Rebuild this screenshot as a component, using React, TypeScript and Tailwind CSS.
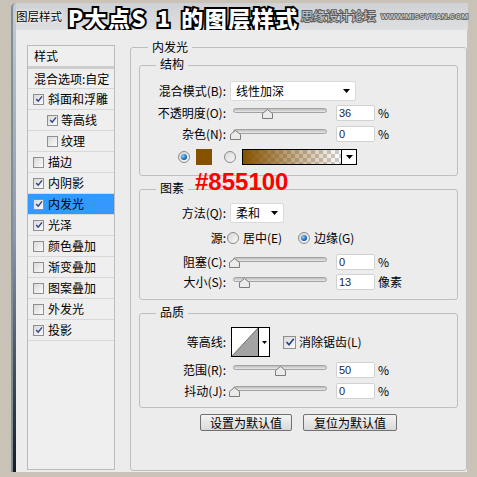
import type { ReactNode } from 'react'

const items = [
  { t: '斜面和浮雕', c: true, sub: false },
  { t: '等高线', c: true, sub: true },
  { t: '纹理', c: false, sub: true },
  { t: '描边', c: false, sub: false },
  { t: '内阴影', c: true, sub: false },
  { t: '内发光', c: true, sub: false, sel: true },
  { t: '光泽', c: true, sub: false },
  { t: '颜色叠加', c: false, sub: false },
  { t: '渐变叠加', c: false, sub: false },
  { t: '图案叠加', c: false, sub: false },
  { t: '外发光', c: false, sub: false },
  { t: '投影', c: true, sub: false },
]

function Check({ on, size = 11 }: { on: boolean; size?: number }) {
  return (
    <span
      className={`flex shrink-0 items-center justify-center border border-[#8e8f8f] bg-gradient-to-br from-[#d9d9d9] to-[#fbfbfb] ${size === 13 ? 'h-[13px] w-[13px]' : 'h-[11px] w-[11px]'}`}
    >
      {on && (
        <svg width={size - 3} height={size - 3} viewBox="0 0 10 10">
          <path d="M1.5 5 L4 7.8 L8.8 1.8" fill="none" stroke="#2b3f8f" strokeWidth="1.7" />
        </svg>
      )}
    </span>
  )
}

function Radio({ on }: { on: boolean }) {
  return (
    <span className="flex h-[12px] w-[12px] shrink-0 items-center justify-center rounded-full border border-[#8a8a8a] bg-gradient-to-br from-[#d6d6d6] to-[#fafafa]">
      {on && (
        <span className="h-[6px] w-[6px] rounded-full bg-[radial-gradient(circle_at_35%_35%,#8fd0ff,#1766b8_60%,#0b3f7a)]" />
      )}
    </span>
  )
}

function Slider({ pos }: { pos: number }) {
  return (
    <div className="relative ml-[7px] h-[16px] w-[94px] shrink-0">
      <div className="absolute left-0 right-0 top-[3px] h-[5px] rounded-full border border-[#a3a3a3] bg-gradient-to-b from-[#bdbdbd] to-[#e9e9e9]" />
      <svg className="absolute top-[4px]" style={{ left: pos - 5.5 }} width="11" height="10" viewBox="0 0 11 10">
        <path d="M5.5 0.5 L10.5 4.5 L10.5 9.5 L0.5 9.5 L0.5 4.5 Z" fill="#ebebeb" stroke="#7b7b7b" />
      </svg>
    </div>
  )
}

function NumBox({ v, unit }: { v: string; unit: string }) {
  return (
    <>
      <div className="ml-[9px] flex h-[16px] w-[39px] shrink-0 items-center rounded-[2px] border border-[#d2d2d2] bg-white pl-[2px] font-['Liberation_Sans',sans-serif] text-[11px] text-[#1d2740]">
        {v}
      </div>
      <span className="ml-[3px] text-[12px]">{unit}</span>
    </>
  )
}

function Label({ children }: { children: ReactNode }) {
  return <span className="w-[86px] shrink-0 text-right">{children}</span>
}

function Arrow() {
  return (
    <svg width="7" height="4" viewBox="0 0 7 4">
      <path d="M0 0 H7 L3.5 4 Z" fill="#000" />
    </svg>
  )
}

function Group({ title, className, children }: { title: string; className: string; children: ReactNode }) {
  return (
    <div className={`relative rounded-[3px] border border-[#bfbfbf] ${className}`}>
      <span className="absolute -top-[10px] left-[16px] bg-[#ececec] px-[4px] leading-[16px]">{title}</span>
      {children}
    </div>
  )
}

export default function App() {
  return (
    <div className="h-[477px] w-[477px] overflow-hidden bg-[#c9c2b6] pl-[11px] pt-[3px] font-['Noto_Sans_CJK_SC',sans-serif] text-[12px] leading-[16px] text-black">
      <div className="flex h-[469px] w-[457px]">
        <div className="w-[5px] shrink-0 rounded-tl-[6px] border-l-2 border-[#7f8c9b] bg-gradient-to-b from-[#c3ccd6] via-[#8a99ab] to-[#141c27]" />
        <div className="flex min-w-0 flex-1 flex-col">
          {/* title bar */}
          <div className="flex h-[27px] shrink-0 items-center whitespace-nowrap bg-gradient-to-b from-[#cfd2d5] to-[#dedfe0]">
            <span className="shrink-0 text-[11.5px] leading-none [text-shadow:0_0_3px_#fff,0_0_2px_#fff]">图层样式</span>
            <span className="ml-[6px] shrink-0 text-[22px] font-black leading-[22px] tracking-[1.5px] text-white [-webkit-text-stroke:4px_#000] [paint-order:stroke_fill] [word-spacing:3px]">
              P大点S 1 的图层样式
            </span>
            <span className="ml-[2px] shrink-0 text-[12.5px] leading-none text-[#c9c9c9] [-webkit-text-stroke:2px_#5b5b5b] [paint-order:stroke_fill]">
              思缘设计论坛
            </span>
            <span className="ml-[5px] shrink-0 font-['Liberation_Sans',sans-serif] text-[8px] font-bold leading-none text-[#c9c9c9] [-webkit-text-stroke:1.5px_#5b5b5b] [paint-order:stroke_fill]">
              WWW.MISSYUAN.COM
            </span>
          </div>

          {/* dialog body */}
          <div className="flex h-[442px] border-r border-[#c4c4c4] bg-[#ececec]">
            {/* styles list */}
            <div className="ml-[11px] mt-[15px] h-[425px] w-[88px] shrink-0 border border-[#bcbcbc] bg-[#efefef]">
              <div className="flex h-[23px] items-center border-b-[3px] border-[#cdcdcd] pl-[6px]">样式</div>
              <div className="flex h-[20px] items-center border-b border-[#d8d8d8] pl-[6px]">混合选项:自定</div>
              {items.map((it) => (
                <div
                  key={it.t}
                  className={`flex h-[21px] items-center border-b border-[#d8d8d8] ${it.sub ? 'gap-[3px] pl-[19px]' : 'gap-[4px] pl-[5px]'} ${it.sel ? 'bg-[#3399ff]' : ''}`}
                >
                  <Check on={it.c} />
                  <span>{it.t}</span>
                </div>
              ))}
            </div>

            {/* inner glow */}
            <div className="relative ml-[15px] mt-[17px] flex h-[424px] w-[337px] shrink-0 flex-col rounded-[3px] border border-[#bfbfbf] px-[8px] pt-[17px]">
              <span className="absolute -top-[9px] left-[17px] bg-[#ececec] px-[4px] leading-[16px]">内发光</span>

              <Group title="结构" className="h-[111px] pt-[15px]">
                <div className="flex h-[20px] items-center">
                  <Label>混合模式(B):</Label>
                  <div className="ml-[4px] flex h-[20px] w-[126px] items-center justify-between rounded-[2px] border border-[#dadada] bg-white pl-[5px] pr-[5px]">
                    <span>线性加深</span>
                    <Arrow />
                  </div>
                </div>
                <div className="mt-[4px] flex h-[16px] items-center">
                  <Label>不透明度(O):</Label>
                  <Slider pos={34} />
                  <NumBox v="36" unit="%" />
                </div>
                <div className="mt-[5px] flex h-[16px] items-center">
                  <Label>杂色(N):</Label>
                  <Slider pos={2} />
                  <NumBox v="0" unit="%" />
                </div>
                <div className="mt-[7px] flex h-[16px] items-center pl-[38px]">
                  <Radio on />
                  <span className="ml-[6px] h-[16px] w-[16px] bg-[#855100]" />
                  <span className="ml-[12px]">
                    <Radio on={false} />
                  </span>
                  <div className="ml-[6px] flex h-[16px] w-[115px] border border-black">
                    <div className="flex-1 [background-image:linear-gradient(to_right,#855100,rgba(133,81,0,0)),repeating-conic-gradient(#cdcdcd_0_25%,#ffffff_0_50%)] [background-size:100%_100%,8px_8px]" />
                    <div className="flex w-[15px] items-center justify-center border-l border-black bg-white">
                      <Arrow />
                    </div>
                  </div>
                </div>
              </Group>

              <Group title="图素" className="mt-[13px] h-[111px] pt-[13px]">
                <div className="flex h-[20px] items-center">
                  <Label>方法(Q):</Label>
                  <div className="ml-[4px] flex h-[20px] w-[54px] items-center justify-between rounded-[2px] border border-[#dadada] bg-white pl-[5px] pr-[5px]">
                    <span>柔和</span>
                    <Arrow />
                  </div>
                </div>
                <div className="mt-[7px] flex h-[16px] items-center">
                  <Label>源:</Label>
                  <span className="ml-[1px]">
                    <Radio on={false} />
                  </span>
                  <span className="ml-[4px] w-[40px]">居中(E)</span>
                  <span className="ml-[15px]">
                    <Radio on />
                  </span>
                  <span className="ml-[4px]">边缘(G)</span>
                </div>
                <div className="mt-[8px] flex h-[16px] items-center">
                  <Label>阻塞(C):</Label>
                  <Slider pos={1} />
                  <NumBox v="0" unit="%" />
                </div>
                <div className="mt-[4px] flex h-[16px] items-center">
                  <Label>大小(S):</Label>
                  <Slider pos={11} />
                  <NumBox v="13" unit="像素" />
                </div>
              </Group>

              <Group title="品质" className="mt-[13px] h-[95px] pt-[13px]">
                <div className="flex h-[30px] items-center">
                  <Label>等高线:</Label>
                  <div className="ml-[5px] flex h-[30px] w-[39px] border border-black bg-white">
                    <svg width="26" height="28" viewBox="0 0 26 28" className="shrink-0">
                      <path d="M0 28 L26 0 L26 28 Z" fill="#a3a3a3" />
                      <path d="M0 28 L26 0" stroke="#555" strokeWidth="0.8" />
                    </svg>
                    <div className="flex flex-1 items-center justify-center border-l border-black">
                      <svg width="5" height="3" viewBox="0 0 5 3">
                        <path d="M0 0 H5 L2.5 3 Z" fill="#000" />
                      </svg>
                    </div>
                  </div>
                  <span className="ml-[13px]">
                    <Check on size={13} />
                  </span>
                  <span className="ml-[3px]">消除锯齿(L)</span>
                </div>
                <div className="mt-[5px] flex h-[16px] items-center">
                  <Label>范围(R):</Label>
                  <Slider pos={47} />
                  <NumBox v="50" unit="%" />
                </div>
                <div className="mt-[5px] flex h-[16px] items-center">
                  <Label>抖动(J):</Label>
                  <Slider pos={1} />
                  <NumBox v="0" unit="%" />
                </div>
              </Group>

              <div className="mt-[6px] flex justify-center gap-[11px]">
                <button className="h-[17px] w-[92px] rounded-[2px] border border-[#707070] bg-gradient-to-b from-[#f4f4f4] to-[#d9d9d9] text-[12px] leading-[14px]">
                  设置为默认值
                </button>
                <button className="h-[17px] w-[94px] rounded-[2px] border border-[#707070] bg-gradient-to-b from-[#f4f4f4] to-[#d9d9d9] text-[12px] leading-[14px]">
                  复位为默认值
                </button>
              </div>

              <span className="absolute left-[64px] top-[122px] font-['Liberation_Sans',sans-serif] text-[24px] font-bold leading-[24px] text-[#ff0000]">
                #855100
              </span>
            </div>
          </div>
        </div>
      </div>
    </div>
  )
}
